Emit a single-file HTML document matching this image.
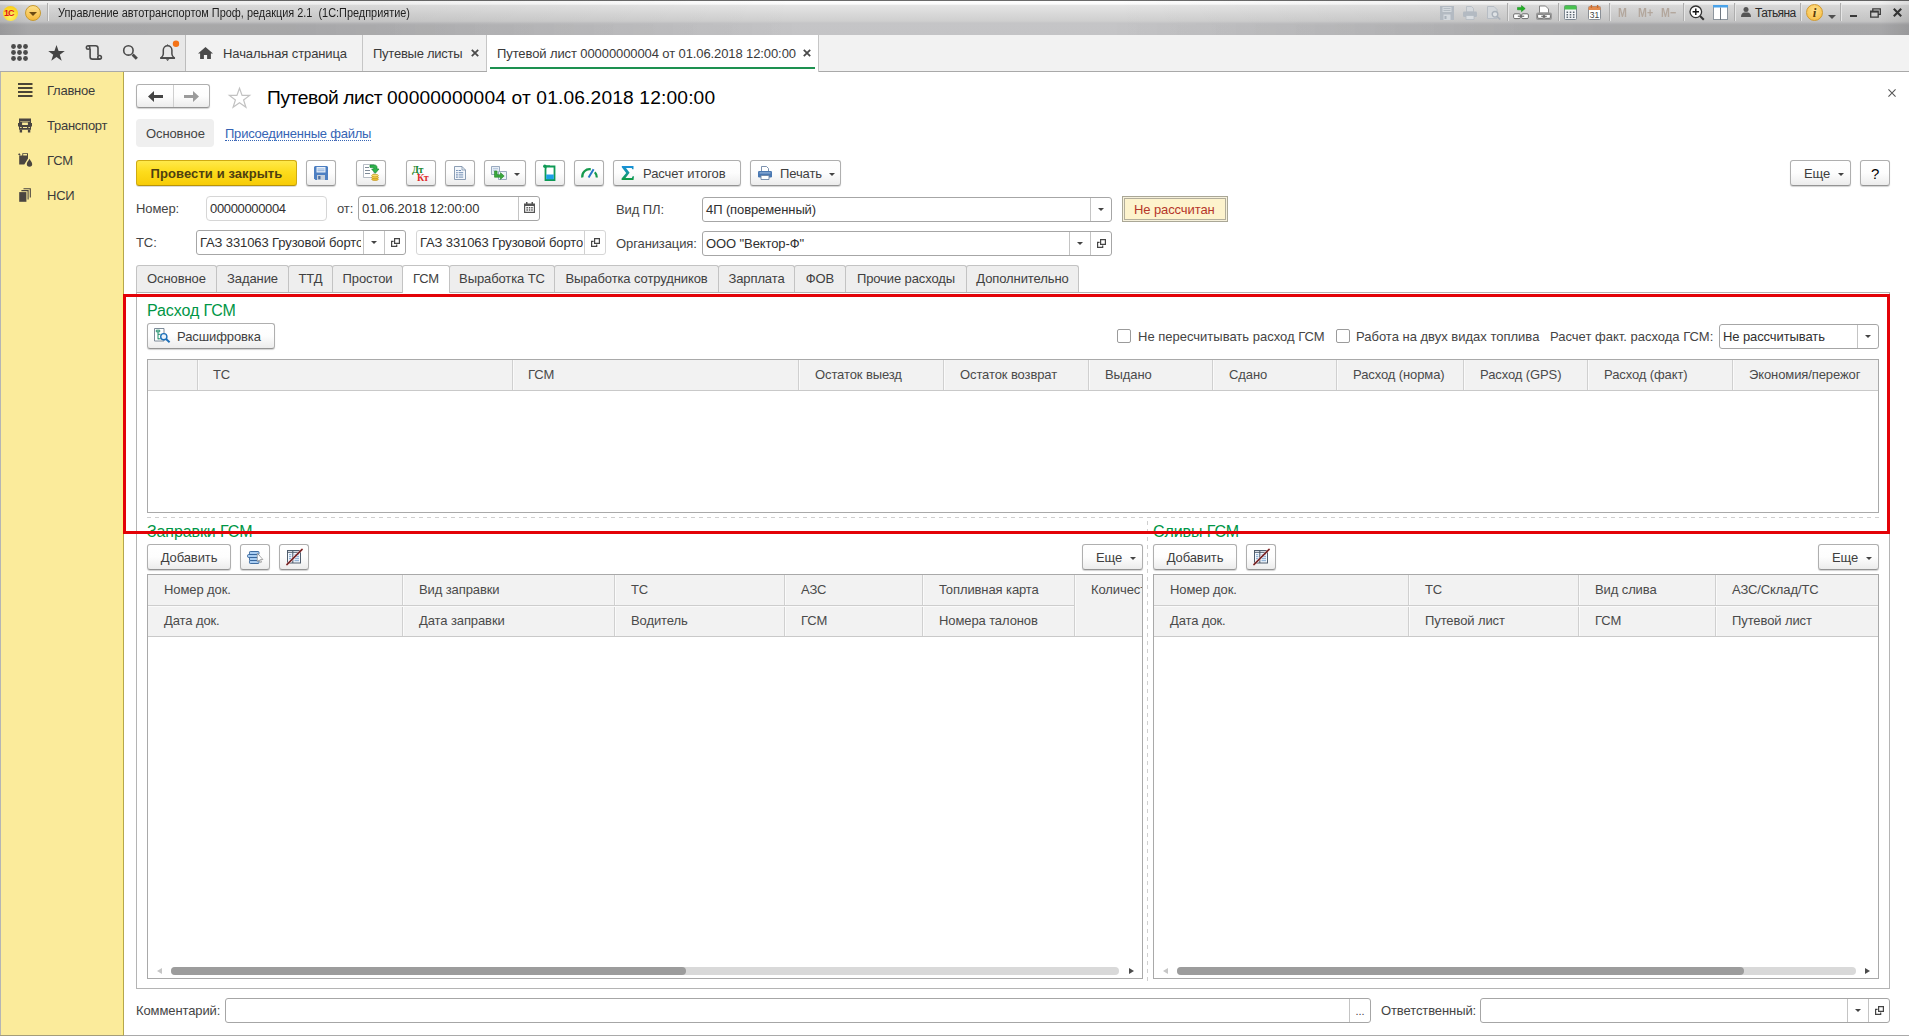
<!DOCTYPE html>
<html lang="ru">
<head>
<meta charset="utf-8">
<title>Путевой лист 00000000004 от 01.06.2018 12:00:00</title>
<style>
*{box-sizing:border-box;margin:0;padding:0}
html,body{width:1909px;height:1036px;overflow:hidden;background:#fff}
body{position:relative;font-family:"Liberation Sans",Arial,sans-serif;font-size:13px;color:#333;line-height:1;letter-spacing:-0.1px}
.abs,.t,.btn,.inp,.ib,.cb,.tab,.th{position:absolute}
.t{white-space:pre;line-height:18px;height:16px;color:#444}
#titlebar{position:absolute;left:0;top:0;width:1909px;height:35px;background:linear-gradient(90deg,rgba(0,0,0,.13) 0,rgba(0,0,0,.055) 1.500%,rgba(0,0,0,.05) 20%,rgba(0,0,0,0) 42%,rgba(0,0,0,0) 58%,rgba(0,0,0,.05) 80%,rgba(0,0,0,.055) 98.500%,rgba(0,0,0,.13) 100%),linear-gradient(#6a6a6a 0,#6a6a6a 1px,#fdfdfd 1.500px,#fcfcfc 4px,#e4e4e4 5.500px,#cfcfcf 21px,#c5c5c7 23px,#c4c4c6 35px)}
#tband{position:absolute;left:0;top:22px;width:1909px;height:13px;background:linear-gradient(90deg,rgba(0,0,0,.1) 0,rgba(0,0,0,.1) 15%,rgba(0,0,0,0) 42%,rgba(0,0,0,0) 58%,rgba(0,0,0,.1) 85%,rgba(0,0,0,.1) 100%);-webkit-mask-image:linear-gradient(transparent 0,#000 3px);mask-image:linear-gradient(transparent 0,#000 3px)}
#toolbar{position:absolute;left:0;top:35px;width:1909px;height:37px;background:#f2f2f2;border-bottom:1px solid #a9a9a9}
#tools{position:absolute;left:0;top:0;width:186px;height:36px;background:#e8e8e8;border-right:1px solid #bdbdbd}
#side{position:absolute;left:0;top:72px;width:124px;height:964px;background:#fbeb9b;border-left:1px solid #b5b5b5;border-right:1px solid #b5a552;box-shadow:inset -1px 0 0 #fdf084}
.btn{height:26px;top:160px;border:1px solid #afafaf;border-bottom-color:#949494;border-radius:3px;background:linear-gradient(#ffffff 0,#fdfdfd 50%,#ececec 100%);box-shadow:0 1px 1px rgba(0,0,0,.18);color:#3f3f3f;white-space:pre;line-height:25px;text-align:center}
.inp{height:25px;border:1px solid #a6a6a6;border-radius:3px;background:#fff;color:#303030;white-space:pre;line-height:23px;padding-left:3px;overflow:hidden}
.ib{top:0;right:0;width:21px;height:23px;border-left:1px solid #c4c4c4}
.dd:after{content:"";position:absolute;left:7px;top:10px;border:3px solid transparent;border-top:3px solid #444;border-bottom:0}
.tab{top:265px;height:27px;border:1px solid #c3c3c3;border-bottom:0;border-radius:3px 3px 0 0;background:#eeeeee;color:#3f3f3f;text-align:center;line-height:26px;white-space:pre}
.tab.act{background:#fff;height:28px;z-index:3}
.th{color:#4a4a4a;white-space:pre;line-height:16px}
.grid{position:absolute;border:1px solid #a9a9a9;background:#fff;overflow:hidden}
.hd{position:absolute;left:0;top:0;right:0;background:#f2f2f2;border-bottom:1px solid #c9c9c9}
.vl{position:absolute;top:0;width:1px;background:#d0d0d0;box-shadow:1px 0 0 #fafafa}
.green{position:absolute;color:#009646;font-size:16px;white-space:pre;line-height:20px}
.cb{width:14px;height:14px;border:1px solid #9b9b9b;border-radius:2px;background:#fff}
svg{position:absolute;overflow:visible;z-index:5}
.ar{z-index:5}
</style>
</head>
<body>
<!-- TITLEBAR -->
<div id="titlebar">
<div id="tband"></div>
<div class="abs" style="left:3px;top:6px;width:15px;height:15px;border-radius:50%;background:radial-gradient(circle at 50% 70%,#fff36a,#fbd21c 70%,#f2c01a)"></div>
<div class="abs" style="left:4px;top:8px;font:bold 9px 'Liberation Sans',sans-serif;color:#e0141b;letter-spacing:-1px;line-height:10px">1С</div>
<div class="abs" style="left:25px;top:5px;width:16px;height:16px;border-radius:50%;border:1px solid #c89a2e;background:linear-gradient(#fde08a,#f5b83a)"></div>
<div class="abs" style="left:29px;top:12px;border:4px solid transparent;border-top:4px solid #6b4a12;border-bottom:0"></div>
<div class="abs" style="left:47px;top:3px;width:1px;height:18px;background:#b0b0b0;box-shadow:1px 0 0 #ececec"></div>
<div class="t" style="left:58px;top:4px;font-size:12px;color:#1e1e1e;letter-spacing:0;transform-origin:0 0;transform:scaleX(0.909)">Управление автотранспортом Проф, редакция 2.1  (1С:Предприятие)</div>

<!-- save (disabled) -->
<svg style="left:1440px;top:6px" width="14" height="14" viewBox="0 0 14 14"><path fill="#b3bac2" d="M0 0h14v14H0z"/><path fill="#d3d8dd" d="M2.500 1h9v5h-9zM3.500 8.500h7V14h-7z"/><path fill="#aab2bb" d="M4.500 10h2v3h-2zM3.500 2.300h7v.8h-7zM3.500 4h7v.8h-7z"/></svg>
<!-- print (disabled) -->
<svg style="left:1463px;top:6px" width="14" height="14" viewBox="0 0 14 14"><path fill="#d5d9dd" stroke="#b3bac2" stroke-width=".8" d="M3.500.5h5l2 2V6h-7z"/><rect x="0" y="5.500" width="14" height="5.500" rx="1.200" fill="#b3bac2"/><path fill="#d9dde1" stroke="#b3bac2" stroke-width=".8" d="M3 9.500h8v4H3z"/></svg>
<!-- preview (disabled) -->
<svg style="left:1487px;top:6px" width="14" height="14" viewBox="0 0 14 14"><path fill="#d3d7db" stroke="#b3bac2" stroke-width=".9" d="M.5.500h6.500l3 3V12.500H.5z"/><circle cx="8" cy="8.300" r="2.800" fill="#dfe3e6" stroke="#a9b1ba" stroke-width="1.400"/><path d="M10.200 10.500l3 3" stroke="#a9b1ba" stroke-width="1.700"/></svg>
<div class="abs" style="left:1507px;top:3px;width:1px;height:18px;background:#adadad;box-shadow:1px 0 0 #e6e6e6"></div>
<!-- link green -->
<svg style="left:1513px;top:5px" width="16" height="15" viewBox="0 0 16 15"><path fill="#1fb022" stroke="#0d8a12" stroke-width=".5" d="M4.500 2.400h4V.5L12.200 3.600 8.500 6.700V4.800h-4z"/><rect x=".6" y="8.800" width="6.800" height="4.800" rx="1.300" fill="#fff" stroke="#6a6a6a" stroke-width="1"/><rect x="8.600" y="8.800" width="6.800" height="4.800" rx="1.300" fill="#fff" stroke="#6a6a6a" stroke-width="1"/><path d="M4.800 11.200h6.400" stroke="#6a6a6a" stroke-width="1.200"/></svg>
<!-- print link -->
<svg style="left:1536px;top:5px" width="16" height="15" viewBox="0 0 16 15"><path fill="#fff" stroke="#777" stroke-width=".9" d="M3.500 1h6l3 3v4h-9z"/><path fill="#9a9a9a" d="M0 9.500a2 2 0 0 1 2-2h12a2 2 0 0 1 2 2v3.500a2 2 0 0 1-2 2H2a2 2 0 0 1-2-2z"/><rect x="1.600" y="9.300" width="5.800" height="4" rx="1.100" fill="#fff" stroke="#666" stroke-width=".9"/><rect x="8.600" y="9.300" width="5.800" height="4" rx="1.100" fill="#fff" stroke="#666" stroke-width=".9"/><path d="M5.200 11.300h5.600" stroke="#666" stroke-width="1.100"/></svg>
<div class="abs" style="left:1558px;top:3px;width:1px;height:18px;background:#adadad;box-shadow:1px 0 0 #e6e6e6"></div>
<!-- calc -->
<svg style="left:1564px;top:5px" width="13" height="15" viewBox="0 0 13 15"><rect x=".5" y=".5" width="12" height="14" rx="1" fill="#f4f6f8" stroke="#7d8791"/><path fill="#49c24f" d="M.5 1.500a1 1 0 0 1 1-1h10a1 1 0 0 1 1 1V4.500H.5z"/><path fill="#5d6872" d="M2.500 6.500h1.600v1.500H2.500zM5.700 6.500h1.600v1.500H5.700zM8.900 6.500h1.600v1.500H8.900zM2.500 9h1.600v1.500H2.500zM5.700 9h1.600v1.500H5.700zM8.900 9h1.600v1.500H8.900zM2.500 11.500h1.600V13H2.500zM5.700 11.500h1.600V13H5.700zM8.900 11.500h1.600V13H8.900z"/></svg>
<!-- calendar -->
<svg style="left:1588px;top:5px" width="13" height="15" viewBox="0 0 13 15"><rect x=".5" y="1.500" width="12" height="13" rx="1" fill="#fff" stroke="#8a8f96"/><path fill="#e58a4b" d="M.5 2.500a1 1 0 0 1 1-1h10a1 1 0 0 1 1 1V5H.5z"/><path fill="#c96a2c" d="M2.700 0h1.400v3H2.700zM8.900 0h1.400v3H8.900z"/><text x="6.500" y="13" font-family="Liberation Sans, sans-serif" font-size="8.500" fill="#444" text-anchor="middle">31</text></svg>
<div class="abs" style="left:1609px;top:3px;width:1px;height:18px;background:#adadad;box-shadow:1px 0 0 #e6e6e6"></div>
<div class="t" style="left:1618px;top:4px;font-size:13px;font-weight:bold;color:#b3a79d;letter-spacing:0;transform-origin:0 0;transform:scaleX(.82)">M</div>
<div class="t" style="left:1638px;top:4px;font-size:13px;font-weight:bold;color:#b3a79d;letter-spacing:0;transform-origin:0 0;transform:scaleX(.82)">M+</div>
<div class="t" style="left:1661px;top:4px;font-size:13px;font-weight:bold;color:#b3a79d;letter-spacing:0;transform-origin:0 0;transform:scaleX(.82)">M−</div>
<div class="abs" style="left:1683px;top:3px;width:1px;height:18px;background:#adadad;box-shadow:1px 0 0 #e6e6e6"></div>
<!-- zoom -->
<svg style="left:1689px;top:5px" width="16" height="16" viewBox="0 0 16 16"><circle cx="6.800" cy="6.800" r="5.800" fill="#fff" stroke="#333" stroke-width="1.300"/><path d="M3.600 6.800h6.400M6.800 3.600v6.400" stroke="#111" stroke-width="1.400"/><path d="M11 11l3.800 3.800" stroke="#333" stroke-width="2"/></svg>
<!-- panels -->
<svg style="left:1713px;top:5px" width="15" height="15" viewBox="0 0 15 15"><rect x=".5" y=".5" width="14" height="14" fill="#fff" stroke="#8d959d"/><path fill="#4aa3ea" d="M0 0h15v2.500H0z"/><path d="M7.500 2.500V15" stroke="#6f7780" stroke-width="1"/></svg>
<div class="abs" style="left:1734px;top:3px;width:1px;height:18px;background:#adadad;box-shadow:1px 0 0 #e6e6e6"></div>
<!-- user -->
<svg style="left:1741px;top:7px" width="10" height="10" viewBox="0 0 10 10"><circle cx="5" cy="2.600" r="2.500" fill="#555"/><path fill="#555" d="M0 10c0-3 1.500-4.600 3.300-4.600h3.400C8.500 5.400 10 7 10 10z"/></svg>
<div class="t" style="left:1755px;top:4px;font-size:12px;color:#2a2a2a;letter-spacing:-0.600px">Татьяна</div>
<div class="abs" style="left:1800px;top:3px;width:1px;height:18px;background:#adadad;box-shadow:1px 0 0 #e6e6e6"></div>
<!-- info -->
<div class="abs" style="left:1806px;top:4px;width:17px;height:17px;border-radius:50%;border:1px solid #d29a2c;background:radial-gradient(circle at 50% 35%,#ffe08a,#f6b93b)"></div>
<div class="abs" style="left:1806px;top:5px;width:17px;text-align:center;font:italic bold 13px 'Liberation Serif',serif;color:#5a3c0a;line-height:15px">i</div>
<div class="abs" style="left:1828px;top:15px;border:4px solid transparent;border-top:4px solid #4f4f4f;border-bottom:0"></div>
<div class="abs" style="left:1840px;top:3px;width:1px;height:18px;background:#adadad;box-shadow:1px 0 0 #e6e6e6"></div>
<div class="abs" style="left:1850px;top:15px;width:7px;height:2px;background:#3a3a3a"></div>
<svg style="left:1870px;top:8px" width="11" height="10" viewBox="0 0 11 10"><path fill="none" stroke="#3a3a3a" stroke-width="1.300" d="M2.800 3V.8h7.500v5.500H8M.7 3.200h7.500v6H.7z"/><path d="M.7 3.800h7.500" stroke="#3a3a3a" stroke-width="1.600"/></svg>
<svg style="left:1893px;top:8px" width="9" height="9" viewBox="0 0 9 9"><path d="M.8.800l7.400 7.400M8.200.800L.8 8.200" stroke="#333" stroke-width="2.100"/></svg>

</div>
<!-- TOOLBAR -->
<div id="toolbar">
<div id="tools"></div>

<!-- grid icon -->
<svg style="left:11px;top:9px" width="17" height="17" viewBox="0 0 17 17"><g fill="#4b4b4b"><circle cx="2.5" cy="2.5" r="2.4"/><circle cx="8.5" cy="2.5" r="2.4"/><circle cx="14.5" cy="2.5" r="2.4"/><circle cx="2.5" cy="8.5" r="2.4"/><circle cx="8.5" cy="8.5" r="2.4"/><circle cx="14.5" cy="8.5" r="2.4"/><circle cx="2.5" cy="14.5" r="2.4"/><circle cx="8.5" cy="14.5" r="2.4"/><circle cx="14.5" cy="14.5" r="2.4"/></g></svg>
<!-- star -->
<svg style="left:48px;top:10px" width="17" height="16" viewBox="0 0 17 16"><path fill="#454545" d="M8.5 0l2.1 5.9h6.2l-5 3.8 1.9 6.1-5.2-3.7-5.2 3.7 1.9-6.1-5-3.8h6.2z"/></svg>
<!-- history scroll -->
<svg style="left:85px;top:9px" width="18" height="17" viewBox="0 0 18 17"><g fill="none" stroke="#4a4a4a" stroke-width="1.600"><path d="M3.100 1.800H10.600A2.400 2.400 0 0 1 13 4.200V11.600M5.100 4.500V12.700A2.400 2.400 0 0 0 7.500 15.100H14.600"/><circle cx="3.100" cy="3.500" r="1.700"/><circle cx="14.600" cy="13.300" r="1.800"/></g></svg>
<!-- search -->
<svg style="left:122px;top:9px" width="17" height="17" viewBox="0 0 17 17"><circle cx="6.400" cy="6.400" r="4.700" fill="none" stroke="#4a4a4a" stroke-width="1.600"/><path d="M10.600 10.500l4.200 4.200" stroke="#4a4a4a" stroke-width="3"/></svg>
<!-- bell -->
<svg style="left:159px;top:8px" width="20" height="19" viewBox="0 0 20 19"><path fill="none" stroke="#4a4a4a" stroke-width="1.500" stroke-linejoin="round" d="M1.800 15C3.800 13.600 4.300 12.600 4.300 11V7A4.300 4.300 0 0 1 12.900 7V11C12.900 12.600 13.400 13.600 15.400 15Z"/><path d="M1.300 15.100H15.900" stroke="#4a4a4a" stroke-width="1.800"/><path fill="#4a4a4a" d="M6.900 16.200h3.400l-1.700 1.700zM7.700 2.600l.9-1.600.9 1.600z"/><circle cx="17" cy=".8" r="3.200" fill="#f47216"/></svg>
<!-- tab separators -->
<div class="abs" style="left:362px;top:0;width:1px;height:36px;background:#c6c6c6"></div>
<div class="abs" style="left:486px;top:0;width:1px;height:36px;background:#c6c6c6"></div>
<!-- home -->
<svg style="left:198px;top:12px" width="15" height="12" viewBox="0 0 15 12"><path fill="#4a4a4a" d="M7.500 0L0 6.400h2.100V12h3.800V8h3.200v4h3.800V6.400H15z"/></svg>
<div class="t" style="left:223px;top:10px;color:#3a3a3a">Начальная страница</div>
<div class="t" style="left:373px;top:10px;color:#3a3a3a;letter-spacing:-0.250px">Путевые листы</div>
<svg style="left:471px;top:14px" width="8" height="8" viewBox="0 0 8 8"><path d="M.8.800l6.400 6.400M7.200.800L.8 7.200" stroke="#4a4a4a" stroke-width="1.800"/></svg>
<div class="abs" style="left:487px;top:0;width:332px;height:37px;background:#fff;border-right:1px solid #c6c6c6"></div>
<div class="abs" style="left:490px;top:32px;width:325px;height:2px;background:#1d9150"></div>
<div class="t" style="left:497px;top:10px;color:#3a3a3a;letter-spacing:-0.1px">Путевой лист 00000000004 от 01.06.2018 12:00:00</div>
<svg style="left:803px;top:14px" width="8" height="8" viewBox="0 0 8 8"><path d="M.8.800l6.400 6.400M7.200.800L.8 7.200" stroke="#4a4a4a" stroke-width="1.800"/></svg>

</div>
<!-- SIDEBAR -->
<div id="side">

<svg style="left:17px;top:11px" width="15" height="15" viewBox="0 0 15 15"><path d="M0 1h14.500M0 5h14.500M0 9h14.500M0 13h14.500" stroke="#4a4436" stroke-width="2"/></svg>
<div class="t" style="left:46px;top:10px;color:#3b3b3b;letter-spacing:-0.250px">Главное</div>
<svg style="left:17px;top:45.500px" width="14" height="15" viewBox="0 0 14 15"><path fill="#4a4540" fill-rule="evenodd" d="M1 .4H13V11.800H1ZM4.100 4.600H9.900V7H4.100ZM5 8.900H9V9.900H5ZM2.100 8.900H3.600V10H2.100ZM10.400 8.900H11.900V10H10.400ZM2.200 3.300H11.800V3.800H2.200Z"/><path fill="#4a4540" d="M0 5.100H1V8.500H0ZM13 5.100H14V8.500H13ZM1.700 11.800H4.100V14.500H1.700ZM9.900 11.800H12.300V14.500H9.900Z"/></svg>
<div class="t" style="left:46px;top:45px;color:#3b3b3b;letter-spacing:-0.250px">Транспорт</div>
<svg style="left:17px;top:81px" width="15" height="14" viewBox="0 0 15 14"><path fill="#4a4540" fill-rule="evenodd" d="M1.200 2.500H4.300V.2H10V5.600L6.300 11.600H1.200ZM5.200 1.100H9V2.400H5.200Z"/><path fill="#4a4540" d="M0 1.200L1.300 .2 2.600 1.600 1.400 2.600ZM11.500 5.800C12.500 7.800 14.200 9.300 14.200 11A2.700 2.700 0 0 1 8.800 11C8.800 9.300 10.500 7.800 11.500 5.800Z"/></svg>
<div class="t" style="left:46px;top:80px;color:#3b3b3b;letter-spacing:-0.250px">ГСМ</div>
<svg style="left:18px;top:116px" width="12" height="14" viewBox="0 0 12 14"><path fill="#4a4540" d="M.2 4.100H7.400V13.800H.2Z"/><path fill="none" stroke="#4a4540" stroke-width="1.100" d="M2.400 2.600H9.100V11.400M4.500 .8H11.300V9.400"/></svg>
<div class="t" style="left:46px;top:115px;color:#3b3b3b;letter-spacing:-0.250px">НСИ</div>

</div>

<!-- nav -->
<div class="btn" style="left:136px;top:84px;width:74px;height:24px"></div>
<div class="abs" style="left:173px;top:85px;width:1px;height:22px;background:#cfcfcf"></div>
<svg style="left:148px;top:91px" width="15" height="11" viewBox="0 0 15 11"><path fill="#444" d="M6 0v3.900h9v3.200H6V11L0 5.500z"/></svg>
<svg style="left:184px;top:91px" width="15" height="11" viewBox="0 0 15 11"><path fill="#9b9b9b" d="M9 0v3.900H0v3.200h9V11l6-5.500z"/></svg>
<svg style="left:228px;top:87px" width="23" height="21" viewBox="0 0 23 21"><path fill="#fff" stroke="#c2c2c2" stroke-width="1.200" stroke-linejoin="miter" d="M11.500 1.200l2.600 7.200h7.500l-6 4.600 2.300 7.200-6.400-4.500-6.400 4.500 2.300-7.200-6-4.600h7.500z"/></svg>
<div class="t" style="left:267px;top:86px;font-size:19.200px;line-height:24px;height:24px;color:#000;letter-spacing:0.150px"><span style="letter-spacing:-0.380px">Путевой лист </span>00000000004 от 01.06.2018 12:00:00</div>
<svg style="left:1888px;top:89px" width="8" height="8" viewBox="0 0 9 9"><path d="M.5.500l8 8M8.500.500l-8 8" stroke="#555" stroke-width="1.200"/></svg>
<div class="abs" style="left:136px;top:119px;width:78px;height:28px;background:#efefef;border-radius:4px"></div>
<div class="t" style="left:146px;top:125px">Основное</div>
<div class="t" style="left:225px;top:125px;color:#3564b4;letter-spacing:-0.22px">Присоединенные файлы</div>
<div class="abs" style="left:225px;top:140px;width:146px;height:0;border-top:1px dotted #3564b4"></div>
<!-- command bar -->
<div class="btn" style="left:136px;width:161px;background:linear-gradient(#ffe94a 0,#fddc1c 45%,#f7cc08 100%);border-color:#cfab12;border-bottom-color:#b8940a;font-weight:bold;color:#4e3f10;letter-spacing:0.080px;box-shadow:0 1px 0 #dcdcdc">Провести и закрыть</div>
<div class="btn" style="left:306px;width:30px"></div>
<div class="btn" style="left:356px;width:30px"></div>
<div class="btn" style="left:406px;width:30px"></div>
<div class="btn" style="left:445px;width:30px"></div>
<div class="btn" style="left:484px;width:42px"></div>
<div class="btn" style="left:535px;width:30px"></div>
<div class="btn" style="left:574px;width:30px"></div>
<div class="btn" style="left:613px;width:128px;text-align:left;padding-left:29px">Расчет итогов</div>
<div class="btn" style="left:750px;width:91px;text-align:left;padding-left:29px">Печать</div>
<div class="btn" style="left:1790px;width:61px;text-align:left;padding-left:13px">Еще</div>
<div class="btn" style="left:1860px;width:30px;color:#000;font-size:15px">?</div>

<!-- save -->
<svg style="left:314px;top:166px" width="14" height="14" viewBox="0 0 14 14"><path fill="#4d7fc2" d="M1 0h12l1 1v13H1.500L0 12.500V1z"/><path fill="#e9f0f9" d="M2.500 1h9v5.500h-9z"/><path fill="#8fb0dc" d="M3.500 2.500h7v.9h-7zM3.500 4.300h7v.9h-7z"/><path fill="#c5cfdb" d="M3 9h8v5H3z"/><path fill="#4d6f9f" d="M4.200 10h2.300v3.300H4.200z"/></svg>
<!-- post doc -->
<svg style="left:363px;top:164px" width="16" height="17" viewBox="0 0 16 17"><path fill="#fff" stroke="#a3acb6" stroke-width=".8" d="M.5.500h10.500v13H.5z"/><path d="M2 3.500h4M2 6.500h5M2 9.500h5" stroke="#7f8b98" stroke-width="1"/><path fill="#2fb34c" stroke="#168a32" stroke-width=".7" d="M7 1h4.500c1.700 0 2.500 1 2.500 2.500V5h2l-3.700 4.300L8.600 5h2.200V4.200c0-.5-.3-.8-.8-.8H7z"/><ellipse cx="12" cy="15.200" rx="3.400" ry="1.300" fill="#efc235" stroke="#b98c12" stroke-width=".6"/><ellipse cx="12" cy="13.400" rx="3.400" ry="1.300" fill="#f5d050" stroke="#b98c12" stroke-width=".6"/><ellipse cx="12" cy="11.600" rx="3.400" ry="1.300" fill="#fbe070" stroke="#b98c12" stroke-width=".6"/></svg>
<!-- DtKt -->
<div class="abs ar" style="left:412px;top:165px;font:bold 10px 'Liberation Serif',serif;color:#16852a;line-height:10px;letter-spacing:-0.300px">Дт</div>
<div class="abs ar" style="left:417px;top:173px;font:bold 10px 'Liberation Serif',serif;color:#e02a2a;line-height:10px;letter-spacing:-0.300px">Кт</div>
<!-- doc list -->
<svg style="left:454px;top:166px" width="12" height="14" viewBox="0 0 12 14"><path fill="#f2f6fb" stroke="#7f93ab" stroke-width=".9" d="M.5.500h7.500l3.500 3.500v9.500H.5z"/><path fill="none" stroke="#7f93ab" stroke-width=".8" d="M8 .5V4h3.500"/><path d="M2.300 4.500h1.300M2.300 6.700h1.300M2.300 8.900h1.300M2.300 11.100h1.300" stroke="#44689a" stroke-width="1.100"/><path d="M4.600 4.500h2.500M4.600 6.700h4.600M4.600 8.900h4.600M4.600 11.100h4.600" stroke="#6f8db3" stroke-width="1"/></svg>
<!-- create based on -->
<svg style="left:491px;top:166px" width="16" height="14" viewBox="0 0 16 14"><path fill="#e6edf6" stroke="#8fa1b8" stroke-width=".9" d="M.5.500h8v8h-8z"/><path fill="#b9cbe0" d="M2 2h5v1.200H2zM2 4.200h3v1H2z"/><path fill="#eef3f9" stroke="#8fa1b8" stroke-width=".9" d="M7.500 5.500h8v8h-8z"/><path fill="#3aa83d" stroke="#1f8526" stroke-width=".6" d="M3.500 5h2.600v3.800h3.400V6.700l3.700 3.300-3.700 3.300v-2.100H3.500z"/></svg>
<div class="abs ar" style="left:514px;top:173px;border:3px solid transparent;border-top:3px solid #444;border-bottom:0"></div>
<!-- canister -->
<svg style="left:543px;top:164px" width="13" height="17" viewBox="0 0 13 17"><path fill="#fff" stroke="#0f9a55" stroke-width="1.800" d="M3 2.500h8.500v13.500h-9V5z"/><path fill="#1ba0e6" d="M3.200 10.500h7.600v4.800H3.200z"/><circle cx="1.800" cy="2.200" r="1.700" fill="#0f9a55"/><path d="M2 2.200h5" stroke="#0f9a55" stroke-width="1.600"/></svg>
<!-- speedometer -->
<svg style="left:581px;top:168px" width="17" height="10" viewBox="0 0 17 10"><path fill="none" stroke="#169a4e" stroke-width="2.200" d="M1.300 9.500A7.300 7.300 0 0 1 9.800 1.300"/><path fill="none" stroke="#169a4e" stroke-width="2.200" d="M13.800 4.300A7.300 7.300 0 0 1 15.800 9.500"/><path d="M7.600 9.600L12.600 1.200" stroke="#2577c6" stroke-width="2"/></svg>
<!-- sigma -->
<svg style="left:621px;top:166px" width="14" height="14" viewBox="0 0 14 14"><defs><linearGradient id="sg" x1="0" y1="0" x2="0" y2="1"><stop offset="0" stop-color="#1890dc"/><stop offset=".5" stop-color="#14979a"/><stop offset="1" stop-color="#0d9a3c"/></linearGradient></defs><path fill="url(#sg)" d="M.8 0h11.700v3.300h-1.300l-.5-1.300H5l3.600 4.800-4.100 5.100h6.400l.7-1.700h1.400L12.500 14H.6v-1.500L5.200 6.900.8 1.300z"/></svg>
<!-- printer -->
<svg style="left:758px;top:166px" width="14" height="14" viewBox="0 0 14 14"><path fill="#fff" stroke="#6d86a6" stroke-width=".9" d="M3.500.5h5l2 2V6h-7z"/><rect x="0" y="5" width="14" height="6.500" rx="1.300" fill="#4a78b2"/><path fill="#93b3da" d="M1.500 6.300h11v1.200h-11z"/><path fill="#fff" stroke="#6d86a6" stroke-width=".9" d="M3 9.500h8v4H3z"/></svg>
<div class="abs ar" style="left:829px;top:173px;border:3px solid transparent;border-top:3px solid #444;border-bottom:0"></div>
<div class="abs ar" style="left:1838px;top:173px;border:3px solid transparent;border-top:3px solid #444;border-bottom:0"></div>
<!-- decode icon -->
<svg style="left:154px;top:328px" width="17" height="15" viewBox="0 0 17 15"><path fill="#fff" stroke="#6f7f8f" stroke-width=".9" d="M.5.500h9.500v12.500H.5z"/><path fill="none" stroke="#1f8f6a" stroke-width="1" d="M2.300 2.200h3.400v1.600H2.300zM4 3.800v7.500M4 6.300h2.500M4 10.800h2.500"/><circle cx="9.800" cy="8.700" r="3.100" fill="#eaf3fb" stroke="#1d6fb8" stroke-width="1.400"/><path d="M12 11l3.600 3.300" stroke="#1d6fb8" stroke-width="1.900"/></svg>
<!-- list-cursor -->
<svg style="left:247px;top:551px" width="16" height="13" viewBox="0 0 16 13"><rect x="2.500" y=".5" width="9.500" height="3" rx=".8" fill="#a9cdf2" stroke="#2f5f96" stroke-width=".9"/><rect x=".5" y="3.500" width="11.500" height="3" rx="1.200" fill="#a9cdf2" stroke="#2f5f96" stroke-width=".9"/><rect x="2.500" y="6.500" width="9.500" height="3" rx=".6" fill="#a9cdf2" stroke="#2f5f96" stroke-width=".9"/><rect x="2.500" y="9.500" width="9.500" height="3" rx=".8" fill="#a9cdf2" stroke="#2f5f96" stroke-width=".9"/><path fill="#fff" stroke="#8a8a8a" stroke-width=".7" d="M10.300 2.200v8.600l2-1.800 1.300 2.600 1-.5-1.200-2.600h2.500z"/></svg>
<svg style="left:286px;top:549px" width="17" height="17" viewBox="0 0 17 17"><rect x="1.500" y="1.500" width="13" height="12.500" fill="#f3f8fd" stroke="#4f5d6d" stroke-width="1"/><path d="M1.500 3.300h13" stroke="#4f5d6d" stroke-width="1"/><path d="M6.800 1.500v12.500" stroke="#4f5d6d" stroke-width="1.100"/><path d="M3 5.700h2.300M3 7.700h2.300M3 9.700h2.300M8.500 5.700h4.500M8.500 7.700h4.500M8.500 9.700h4.500M8.500 11.700h4.500" stroke="#7ea6cf" stroke-width="1"/><path d="M.5 16L16.500 0" stroke="#f0a8a8" stroke-width="2"/><path d="M.5 16L16.500 0" stroke="#5e1010" stroke-width="1.100"/></svg>
<svg style="left:1253px;top:549px" width="17" height="17" viewBox="0 0 17 17"><rect x="1.500" y="1.500" width="13" height="12.500" fill="#f3f8fd" stroke="#4f5d6d" stroke-width="1"/><path d="M1.500 3.300h13" stroke="#4f5d6d" stroke-width="1"/><path d="M6.800 1.500v12.500" stroke="#4f5d6d" stroke-width="1.100"/><path d="M3 5.700h2.300M3 7.700h2.300M3 9.700h2.300M8.500 5.700h4.500M8.500 7.700h4.500M8.500 9.700h4.500M8.500 11.700h4.500" stroke="#7ea6cf" stroke-width="1"/><path d="M.5 16L16.500 0" stroke="#f0a8a8" stroke-width="2"/><path d="M.5 16L16.500 0" stroke="#5e1010" stroke-width="1.100"/></svg>
<div class="abs ar" style="left:1130px;top:557px;border:3px solid transparent;border-top:3px solid #444;border-bottom:0"></div>
<div class="abs ar" style="left:1866px;top:557px;border:3px solid transparent;border-top:3px solid #444;border-bottom:0"></div>


<!-- row 1 -->
<div class="t" style="left:136px;top:200px">Номер:</div>
<div class="inp" style="left:206px;top:196px;width:121px;border-color:#d6d6d6;border-radius:4px;letter-spacing:-0.350px">00000000004</div>
<div class="t" style="left:337px;top:200px">от:</div>
<div class="inp" style="left:358px;top:196px;width:182px">01.06.2018 12:00:00<div class="ib abs"><svg style="left:5px;top:5px" width="11" height="11" viewBox="0 0 11 11"><path fill="#555" d="M0 1.500h11V11H0zM1.200 4v5.800h8.600V4z" fill-rule="evenodd"/><path fill="#555" d="M2 0h1.500v2.500H2zM7.500 0H9v2.500H7.500zM2.400 5h1.500v1.400H2.400zM4.800 5h1.500v1.400H4.800zM7.200 5h1.500v1.400H7.200zM2.400 7.300h1.500v1.400H2.400zM4.800 7.300h1.500v1.400H4.800zM7.200 7.300h1.500v1.400H7.200z"/></svg></div></div>
<div class="t" style="left:616px;top:201px">Вид ПЛ:</div>
<div class="inp" style="left:702px;top:197px;width:410px">4П (повременный)<div class="ib abs dd"></div></div>
<div class="abs" style="left:1122px;top:196px;width:106px;height:26px;border:1px solid #aaa796;background:#fdf3cd;box-shadow:inset 0 0 0 1px #f6f1dc,inset 0 0 0 2px #b3ae9b"></div>
<div class="t" style="left:1134px;top:201px;color:#b5362a">Не рассчитан</div>
<!-- row 2 -->
<div class="t" style="left:136px;top:234px">ТС:</div>
<div class="inp" style="left:196px;top:230px;width:210px"><span style="display:block;width:160.500px;overflow:hidden">ГАЗ 331063 Грузовой бортовой</span><div class="ib abs dd" style="right:21px"></div><div class="ib abs"><svg style="left:6px;top:7px" width="9" height="9" viewBox="0 0 9 9"><path fill="none" stroke="#444" stroke-width="1.200" d="M3.600.6h4.800v4.800H3.600zM2.600 3.300H.6v5.100h5.100V6.400"/></svg></div></div>
<div class="inp" style="left:416px;top:230px;width:190px;border-color:#d6d6d6"><span style="display:block;width:162.500px;overflow:hidden">ГАЗ 331063 Грузовой бортовой</span><div class="ib abs" style="border-color:#d0d0d0"><svg style="left:6px;top:7px" width="9" height="9" viewBox="0 0 9 9"><path fill="none" stroke="#444" stroke-width="1.200" d="M3.600.6h4.800v4.800H3.600zM2.600 3.300H.6v5.100h5.100V6.400"/></svg></div></div>
<div class="t" style="left:616px;top:235px">Организация:</div>
<div class="inp" style="left:702px;top:231px;width:410px">ООО "Вектор-Ф"<div class="ib abs dd" style="right:21px"></div><div class="ib abs"><svg style="left:6px;top:7px" width="9" height="9" viewBox="0 0 9 9"><path fill="none" stroke="#444" stroke-width="1.200" d="M3.600.6h4.800v4.800H3.600zM2.600 3.300H.6v5.100h5.100V6.400"/></svg></div></div>
<!-- form tabs -->
<div class="tab" style="left:136px;width:81px">Основное</div>
<div class="tab" style="left:216px;width:73px">Задание</div>
<div class="tab" style="left:288px;width:45px">ТТД</div>
<div class="tab" style="left:332px;width:71px">Простои</div>
<div class="tab act" style="left:402px;width:48px">ГСМ</div>
<div class="tab" style="left:449px;width:106px">Выработка ТС</div>
<div class="tab" style="left:554px;width:165px">Выработка сотрудников</div>
<div class="tab" style="left:718px;width:77px">Зарплата</div>
<div class="tab" style="left:794px;width:52px">ФОВ</div>
<div class="tab" style="left:845px;width:122px">Прочие расходы</div>
<div class="tab" style="left:966px;width:113px">Дополнительно</div>
<div class="abs" id="panel" style="left:136px;top:292px;width:1754px;height:697px;border:1px solid #b4b4b4"></div>

<div class="green" style="left:147px;top:301px">Расход ГСМ</div>
<div class="btn" style="left:147px;top:323px;width:128px;text-align:left;padding-left:29px">Расшифровка</div>
<div class="cb" style="left:1117px;top:329px"></div>
<div class="t" style="left:1138px;top:328px;letter-spacing:0">Не пересчитывать расход ГСМ</div>
<div class="cb" style="left:1336px;top:329px"></div>
<div class="t" style="left:1356px;top:328px;letter-spacing:0">Работа на двух видах топлива</div>
<div class="t" style="left:1550px;top:328px;letter-spacing:0">Расчет факт. расхода ГСМ:</div>
<div class="inp" style="left:1719px;top:324px;width:160px">Не рассчитывать<div class="ib abs dd"></div></div>
<div class="grid" style="left:147px;top:359px;width:1732px;height:154px"><div class="hd" style="height:31px"></div><div class="vl" style="left:49px;top:0px;height:30px"></div><div class="vl" style="left:364px;top:0px;height:30px"></div><div class="vl" style="left:650px;top:0px;height:30px"></div><div class="vl" style="left:795px;top:0px;height:30px"></div><div class="vl" style="left:940px;top:0px;height:30px"></div><div class="vl" style="left:1064px;top:0px;height:30px"></div><div class="vl" style="left:1188px;top:0px;height:30px"></div><div class="vl" style="left:1315px;top:0px;height:30px"></div><div class="vl" style="left:1439px;top:0px;height:30px"></div><div class="vl" style="left:1584px;top:0px;height:30px"></div><div class="th" style="left:65px;top:7px">ТС</div><div class="th" style="left:380px;top:7px">ГСМ</div><div class="th" style="left:667px;top:7px">Остаток выезд</div><div class="th" style="left:812px;top:7px">Остаток возврат</div><div class="th" style="left:957px;top:7px">Выдано</div><div class="th" style="left:1081px;top:7px">Сдано</div><div class="th" style="left:1205px;top:7px">Расход (норма)</div><div class="th" style="left:1332px;top:7px">Расход (GPS)</div><div class="th" style="left:1456px;top:7px">Расход (факт)</div><div class="th" style="left:1601px;top:7px">Экономия/пережог</div></div>
<div class="abs" style="left:147px;top:517px;width:1732px;height:1px;background:repeating-linear-gradient(90deg,#cfcfcf 0,#cfcfcf 4px,transparent 4px,transparent 8px)"></div>
<div class="abs" style="left:1147px;top:521px;width:1px;height:462px;background:repeating-linear-gradient(180deg,#cfcfcf 0,#cfcfcf 4px,transparent 4px,transparent 8px)"></div>
<div class="green" style="left:147px;top:522px">Заправки ГСМ</div>
<div class="green" style="left:1153px;top:522px">Сливы ГСМ</div>
<div class="btn" style="left:147px;top:544px;width:84px">Добавить</div>
<div class="btn" style="left:240px;top:544px;width:30px"></div>
<div class="btn" style="left:279px;top:544px;width:30px"></div>
<div class="btn" style="left:1082px;top:544px;width:61px;text-align:left;padding-left:13px">Еще</div>
<div class="btn" style="left:1153px;top:544px;width:84px">Добавить</div>
<div class="btn" style="left:1246px;top:544px;width:30px"></div>
<div class="btn" style="left:1818px;top:544px;width:61px;text-align:left;padding-left:13px">Еще</div>
<div class="grid" style="left:147px;top:574px;width:996px;height:405px"><div class="hd" style="height:62px"></div><div class="vl" style="left:254px;top:0px;height:61px"></div><div class="vl" style="left:466px;top:0px;height:61px"></div><div class="vl" style="left:636px;top:0px;height:61px"></div><div class="vl" style="left:774px;top:0px;height:61px"></div><div class="vl" style="left:926px;top:0px;height:61px"></div><div class="th" style="left:16px;top:7px">Номер док.</div><div class="th" style="left:271px;top:7px">Вид заправки</div><div class="th" style="left:483px;top:7px">ТС</div><div class="th" style="left:653px;top:7px">АЗС</div><div class="th" style="left:791px;top:7px">Топливная карта</div><div class="th" style="left:943px;top:7px">Количество</div><div class="th" style="left:16px;top:38px">Дата док.</div><div class="th" style="left:271px;top:38px">Дата заправки</div><div class="th" style="left:483px;top:38px">Водитель</div><div class="th" style="left:653px;top:38px">ГСМ</div><div class="th" style="left:791px;top:38px">Номера талонов</div><div class="abs" style="left:0;top:30px;width:926px;height:1px;background:#cdcdcd;box-shadow:0 1px 0 #fafafa"></div><div class="abs" style="left:23px;bottom:3px;width:948px;height:8px;border-radius:4px;background:#d9d9d9"></div><div class="abs" style="left:23px;bottom:3px;width:515px;height:8px;border-radius:4px;background:#9c9c9c"></div><div class="abs" style="left:9px;bottom:4px;border:3.500px solid transparent;border-right:5px solid #c6c6c6;border-left:0"></div><div class="abs" style="left:981px;bottom:4px;border:3.500px solid transparent;border-left:5px solid #4c4c4c;border-right:0"></div></div>
<div class="grid" style="left:1153px;top:574px;width:726px;height:405px"><div class="hd" style="height:62px"></div><div class="vl" style="left:254px;top:0px;height:61px"></div><div class="vl" style="left:424px;top:0px;height:61px"></div><div class="vl" style="left:561px;top:0px;height:61px"></div><div class="th" style="left:16px;top:7px">Номер док.</div><div class="th" style="left:271px;top:7px">ТС</div><div class="th" style="left:441px;top:7px">Вид слива</div><div class="th" style="left:578px;top:7px">АЗС/Склад/ТС</div><div class="th" style="left:16px;top:38px">Дата док.</div><div class="th" style="left:271px;top:38px">Путевой лист</div><div class="th" style="left:441px;top:38px">ГСМ</div><div class="th" style="left:578px;top:38px">Путевой лист</div><div class="abs" style="left:0;top:30px;width:726px;height:1px;background:#cdcdcd;box-shadow:0 1px 0 #fafafa"></div><div class="abs" style="left:23px;bottom:3px;width:679px;height:8px;border-radius:4px;background:#d9d9d9"></div><div class="abs" style="left:23px;bottom:3px;width:567px;height:8px;border-radius:4px;background:#9c9c9c"></div><div class="abs" style="left:9px;bottom:4px;border:3.500px solid transparent;border-right:5px solid #c6c6c6;border-left:0"></div><div class="abs" style="left:711px;bottom:4px;border:3.500px solid transparent;border-left:5px solid #4c4c4c;border-right:0"></div></div>

<div class="abs" style="left:123px;top:294px;width:1767px;height:240px;border:3px solid #e30207;z-index:9"></div>

<div class="t" style="left:136px;top:1002px">Комментарий:</div>
<div class="inp" style="left:225px;top:998px;width:1146px"><div class="ib abs" style="color:#444;font-size:11px;text-align:center;line-height:24px;letter-spacing:0">...</div></div>
<div class="t" style="left:1381px;top:1002px">Ответственный:</div>
<div class="inp" style="left:1480px;top:998px;width:410px"><div class="ib abs dd" style="right:21px"></div><div class="ib abs"><svg style="left:6px;top:7px" width="9" height="9" viewBox="0 0 9 9"><path fill="none" stroke="#444" stroke-width="1.200" d="M3.600.6h4.800v4.800H3.600zM2.600 3.300H.6v5.100h5.100V6.400"/></svg></div></div>
<div class="abs" style="left:0;top:1035px;width:1909px;height:1px;background:#a9a9a9;z-index:6"></div><div class="abs" style="left:0;top:1035px;width:124px;height:1px;background:#a59d78;z-index:7"></div>



</body>
</html>
